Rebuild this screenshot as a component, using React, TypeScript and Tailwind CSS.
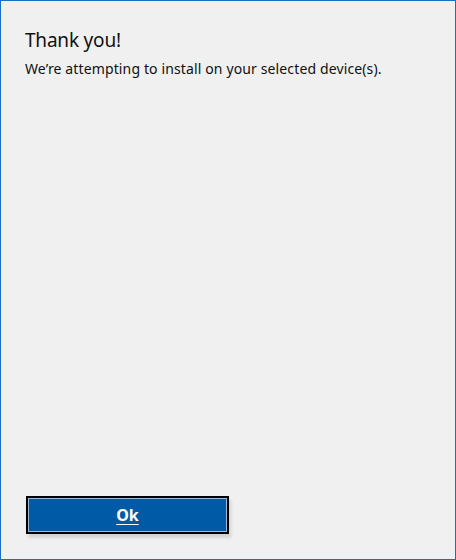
export default function App() {
  return (
    <div
      className="w-[456px] h-[560px] bg-[#f0f0f0] border border-[#1a6fc0] flex flex-col"
      style={{ fontFamily: '"Noto Sans", "Open Sans", sans-serif' }}
    >
      <div className="pl-[24px] pt-[26px]">
        <h1 className="text-[19px] tracking-[-0.2px] leading-[26px] text-[#111] font-normal">Thank you!</h1>
        <p className="mt-[6px] text-[14px] tracking-[0.13px] leading-[20px] text-[#111]">
          We’re attempting to install on your selected device(s).
        </p>
      </div>
      <div className="flex-1" />
      <div className="pl-[25px] pb-[25px]">
        <button className="w-[203px] h-[38px] border-2 border-black bg-[#005aa6] shadow-[2px_4px_3px_rgba(0,0,0,0.12)] p-0">
          <div className="w-full h-full border border-[#9fb9d8] flex items-center justify-center">
            <span className="text-white text-[16px] font-bold underline underline-offset-[3px]">Ok</span>
          </div>
        </button>
      </div>
    </div>
  );
}
